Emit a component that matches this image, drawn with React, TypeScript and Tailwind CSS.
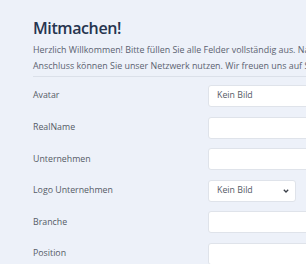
import React from "react";

const fields = [
  { label: "Avatar", kind: "select-wide" },
  { label: "RealName", kind: "input" },
  { label: "Unternehmen", kind: "input" },
  { label: "Logo Unternehmen", kind: "select" },
  { label: "Branche", kind: "input" },
  { label: "Position", kind: "input" },
];

function Chevron() {
  return (
    <svg width="6" height="4" viewBox="0 0 6 4" className="shrink-0">
      <path d="M0.8 0.8 L3 3 L5.2 0.8" fill="none" stroke="#3a3f48" strokeWidth="1.3" />
    </svg>
  );
}

export default function App() {
  return (
    <div className="h-[264px] w-[306px] overflow-hidden bg-[#edf1f9] pl-[33px] pt-[17px] font-['Open_Sans','Noto_Sans',sans-serif]">
      <h1 className="text-[16px] font-semibold leading-[22px] tracking-[-0.4px] text-[#26344f]">
        Mitmachen!
      </h1>
      <p className="mt-[2.5px] whitespace-nowrap text-[8.9px] leading-[16px] text-[#5b6270]">
        Herzlich Willkommen! Bitte füllen Sie alle Felder vollständig aus. Nach der Freischaltung
        <br />
        Anschluss können Sie unser Netzwerk nutzen. Wir freuen uns auf Sie!
      </p>
      <div className="mt-[2.5px] h-px w-[400px] bg-[#dbe0e9]" />

      <div className="mt-[8px] flex flex-col gap-[9.6px]">
        {fields.map((f) => (
          <div key={f.label} className="flex items-center">
            <label className="w-[175px] shrink-0 text-[8.8px] text-[#555b66]">{f.label}</label>
            {f.kind === "input" && (
              <div className="h-[22px] w-[220px] shrink-0 rounded-[3px] border border-[#dfe3ea] bg-white" />
            )}
            {f.kind === "select-wide" && (
              <div className="flex h-[22px] w-[220px] shrink-0 items-center rounded-[3px] border border-[#dfe3ea] bg-white pl-[8px] text-[8.8px] text-[#555b66]">
                Kein Bild
              </div>
            )}
            {f.kind === "select" && (
              <div className="flex h-[22px] w-[88px] shrink-0 items-center justify-between rounded-[3px] border border-[#dfe3ea] bg-white pl-[8px] pr-[6px] text-[8.8px] text-[#555b66]">
                Kein Bild
                <Chevron />
              </div>
            )}
          </div>
        ))}
      </div>
    </div>
  );
}
